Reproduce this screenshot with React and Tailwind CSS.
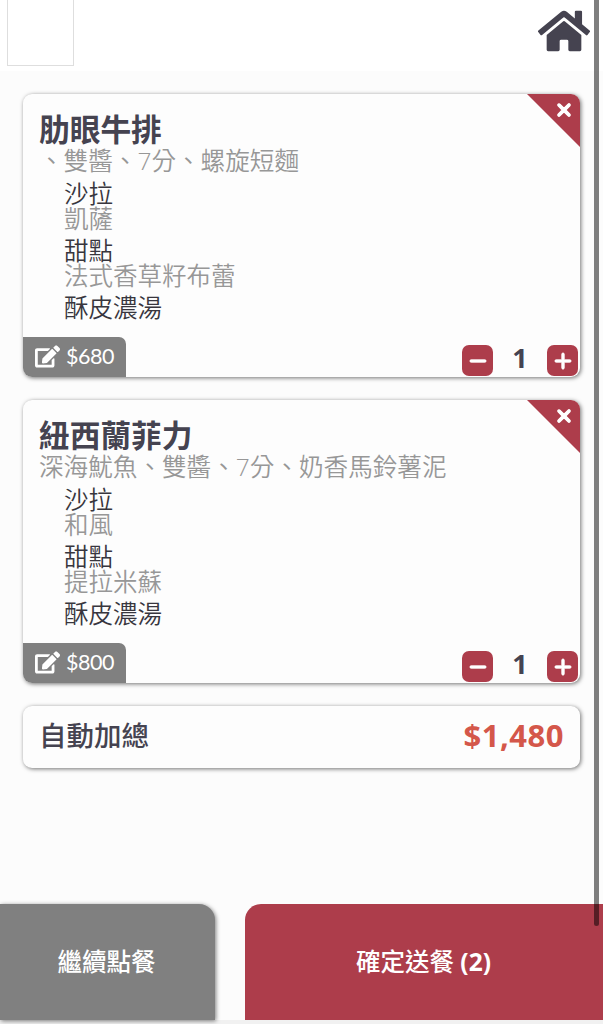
import React, { useState } from "react";
import { FaHome, FaEdit } from "react-icons/fa";
import { FaMinus, FaPlus, FaXmark } from "react-icons/fa6";

const PEDIDO = [
  {
    name: "肋眼牛排",
    options: "、雙醬、7分、螺旋短麵",
    price: 680,
    sides: [
      { title: "沙拉", value: "凱薩" },
      { title: "甜點", value: "法式香草籽布蕾" },
      { title: "酥皮濃湯" },
    ],
  },
  {
    name: "紐西蘭菲力",
    options: "深海魷魚、雙醬、7分、奶香馬鈴薯泥",
    price: 800,
    sides: [
      { title: "沙拉", value: "和風" },
      { title: "甜點", value: "提拉米蘇" },
      { title: "酥皮濃湯" },
    ],
  },
];

const CARD = "rounded-[9px] bg-[#fdfdfd] shadow-[1px_1px_4px_rgba(0,0,0,0.55)]";

function QtyButton({ onClick, children }) {
  return (
    <button
      onClick={onClick}
      className="flex h-[31px] w-[31px] items-center justify-center rounded-[7px] bg-[#ad3d4b] text-[20px] text-white"
    >
      {children}
    </button>
  );
}

function MealCard({ meal, qty, onQty, onRemove }) {
  return (
    <div className={`relative flex h-[283px] flex-col ${CARD}`}>
      <button
        onClick={onRemove}
        className="absolute top-0 right-0 h-[53px] w-[53px] rounded-tr-[9px] bg-[#ad3d4b] text-white [clip-path:polygon(0_0,100%_0,100%_100%)]"
      >
        <FaXmark className="absolute top-[6px] left-[27px] stroke-current stroke-[30px] text-[20px]" />
      </button>

      <div className="flex-1 pt-[16px] pl-[16px]">
        <h2 className="h-[38px] text-[30.7px] leading-[38px] font-bold">{meal.name}</h2>
        <p className="h-[33px] text-[24.6px] leading-[25px] font-[350] whitespace-nowrap text-[#979797]">{meal.options}</p>
        <div className="flex flex-col gap-[7px] pl-[25px] text-[24.5px] leading-[25px] font-[350]">
          {meal.sides.map((side) => (
            <div key={side.title}>
              <p className="text-[#38363e]">{side.title}</p>
              {side.value && <p className="text-[#979797]">{side.value}</p>}
            </div>
          ))}
        </div>
      </div>

      <div className="flex items-end justify-between">
        <button className="flex h-10 w-[103px] items-center gap-[6px] rounded-tr-[7px] rounded-bl-[9px] bg-[#808080] pl-[12px] text-white">
          <FaEdit className="mb-[2px] text-[25px]" />
          <span className="font-['Lato'] text-[21.5px] leading-none tracking-[-0.5px]">${meal.price}</span>
        </button>
        <div className="flex items-center pr-[2px] pb-[1px]">
          <QtyButton onClick={() => onQty(-1)}>
            <FaMinus className="stroke-current stroke-[20px]" />
          </QtyButton>
          <span className="w-[54px] pb-[6px] text-center text-[27px] leading-[25px] font-bold">{qty}</span>
          <QtyButton onClick={() => onQty(1)}>
            <FaPlus className="stroke-current stroke-[20px]" />
          </QtyButton>
        </div>
      </div>
    </div>
  );
}

export default function App() {
  const [meals, setMeals] = useState(PEDIDO.map((meal) => ({ ...meal, qty: 1 })));

  const handleQty = (index, delta) => {
    setMeals((prev) => prev.map((m, i) => (i === index ? { ...m, qty: Math.max(1, m.qty + delta) } : m)));
  };

  const handleRemove = (index) => {
    setMeals((prev) => prev.filter((_, i) => i !== index));
  };

  const total = meals.reduce((sum, m) => sum + m.price * m.qty, 0);
  const count = meals.reduce((sum, m) => sum + m.qty, 0);

  return (
    <div className="relative flex h-[1024px] w-[603px] flex-col overflow-hidden bg-[#fcfcfc] font-['Open_Sans','Noto_Sans_CJK_TC',sans-serif] text-[#454350]">
      <header className="flex h-[71px] items-start justify-between bg-white pr-[13px] pl-[7px]">
        <div className="h-[66px] w-[67px] border border-t-0 border-[#dedede] bg-white" />
        <FaHome className="mt-[5px] text-[52px]" />
      </header>

      <main className="flex flex-1 flex-col gap-[23px] pt-[23px] pr-[23px] pl-[23px]">
        {meals.map((meal, index) => (
          <MealCard
            key={meal.name}
            meal={meal}
            qty={meal.qty}
            onQty={(delta) => handleQty(index, delta)}
            onRemove={() => handleRemove(index)}
          />
        ))}
        <div className={`flex h-[62px] items-center justify-between px-[16px] pb-[3px] ${CARD}`}>
          <span className="text-[27.5px] leading-none font-medium">自動加總</span>
          <span className="text-[31px] leading-none font-bold tracking-[0.5px] text-[#d4574a]">
            ${total.toLocaleString("en-US")}
          </span>
        </div>
      </main>

      <footer className="flex h-[120px] justify-between border-b-4 border-[#f1f1f1] text-[24.5px] font-medium text-white">
        <button className="w-[215px] rounded-tr-[16px] bg-[#808080] pr-[2px] shadow-[1px_1px_4px_rgba(0,0,0,0.5)]">
          繼續點餐
        </button>
        <button className="w-[358px] rounded-tl-[16px] bg-[#ad3d4b] pr-[1px]">
          確定送餐 <span className="font-bold">({count})</span>
        </button>
      </footer>

      {/* scroll thumb */}
      <div className="absolute top-[-4px] right-[4px] h-[930px] w-[5px] rounded-full bg-black/50" />
    </div>
  );
}
